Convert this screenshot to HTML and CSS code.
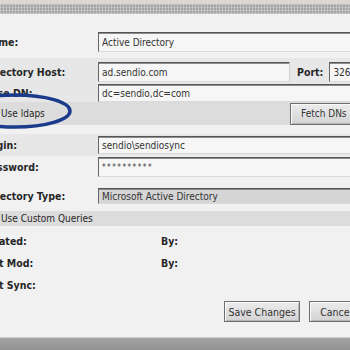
FILE: index.html
```html
<!DOCTYPE html>
<html lang="en">
<head>
    <meta charset="UTF-8">
    <title>Directory Settings</title>
    <link rel="stylesheet" href="styles.css">
</head>
<body>

    <!-- Barra superior -->
    <div class="top-bar"></div>

    <div class="form">
        <div class="row row-name">
            <label class="label">Name:</label>
            <input class="field" type="text" value="Active Directory">
        </div>

        <div class="row row-host shade">
            <label class="label">Directory Host:</label>
            <input class="field field-host" type="text" value="ad.sendio.com">
            <label class="label label-port">Port:</label>
            <input class="field field-port" type="text" value="3268">
        </div>

        <div class="row row-dn shade">
            <label class="label">Base DN:</label>
            <input class="field" type="text" value="dc=sendio,dc=com">
        </div>

        <div class="row row-ldaps dark">
            <input class="check" type="checkbox">
            <span class="check-text">Use ldaps</span>
            <button class="btn btn-fetch">Fetch DNs</button>
        </div>

        <div class="row row-login shade">
            <label class="label">Login:</label>
            <input class="field" type="text" value="sendio\sendiosync">
        </div>

        <div class="row row-pass">
            <label class="label">Password:</label>
            <input class="field field-pass" type="text" value="**********">
        </div>

        <div class="row row-type">
            <label class="label">Directory Type:</label>
            <div class="field select">Microsoft Active Directory</div>
        </div>

        <div class="row row-custom dark">
            <input class="check" type="checkbox">
            <span class="check-text">Use Custom Queries</span>
        </div>

        <div class="row row-meta first">
            <span class="label">Created:</span>
            <span class="label by">By:</span>
        </div>
        <div class="row row-meta">
            <span class="label">Last Mod:</span>
            <span class="label by">By:</span>
        </div>
        <div class="row row-meta">
            <span class="label">Last Sync:</span>
        </div>

        <div class="row row-actions">
            <button class="btn btn-save">Save Changes</button>
            <button class="btn btn-cancel">Cancel</button>
        </div>
    </div>

    <!-- Barra inferior -->
    <div class="bottom-bar"></div>

    <!-- Marcação azul em volta do "Use ldaps" -->
    <svg class="mark" width="120" height="50" viewBox="0 0 120 50">
        <ellipse cx="40" cy="24" rx="55" ry="16" fill="none" stroke="#1a3a8c" stroke-width="3.5"/>
    </svg>

</body>
</html>
```

FILE: styles.css
```css
body {
    margin: 0;
    width: 350px;
    height: 350px;
    overflow: hidden;
    position: relative;
    display: flex;
    flex-direction: column;
    background-color: #f1f1f1;
    font-family: "DejaVu Sans Condensed", "DejaVu Sans", sans-serif;
    font-size: 10.5px;
    color: #262626;
}

/* Barra superior com textura */
.top-bar {
    height: 10px;
    border-top: 4px solid #d9d7d0;
    background-color: #a6a6a6;
    background-image:
        repeating-linear-gradient(90deg, rgba(255, 255, 255, 0.28) 0 1px, transparent 1px 3px),
        repeating-linear-gradient(0deg, rgba(255, 255, 255, 0.22) 0 1px, transparent 1px 3px);
}

/* O formulario comeca fora da tela, como no recorte */
.form {
    flex: 1;
    margin-left: -16px;
    width: 380px;
    display: flex;
    flex-direction: column;
}

.row {
    display: flex;
    align-items: center;
}

.shade {
    background-color: #e7e7e7;
}

.dark {
    background-color: #dcdcdc;
}

.label {
    width: 114px;
    flex-shrink: 0;
    font-weight: bold;
}

.field {
    box-sizing: border-box;
    flex: 1;
    height: 20px;
    margin: 0;
    padding: 0 3px;
    border: 1px solid;
    border-color: #555 #d0d0d0 #dadada #666;
    box-shadow: inset 0 1px 0 #8c8c8c;
    background-color: #f6f6f6;
    font: inherit;
    font-size: 10px;
    color: #333;
    outline: none;
}

.row-name {
    padding: 18px 0 6px;
}

.row-host {
    padding: 4px 0 1px;
}

.field-host {
    flex: none;
    width: 192px;
}

.label-port {
    width: auto;
    margin: 0 6px 0 7px;
}

.field-port {
    flex: none;
    width: 40px;
}

.row-dn {
    padding-top: 1px;
}

.row-dn .field {
    height: 18px;
}

.check {
    width: 13px;
    height: 13px;
    margin: 0 4px 0 0;
}

.check-text {
    font-size: 10px;
}

.row-ldaps {
    height: 23px;
}

.btn {
    box-sizing: border-box;
    height: 21px;
    padding: 0;
    border: 1px solid #6f6f6f;
    box-shadow: inset 1px 1px 0 #fafafa, inset -1px -1px 0 #b5b5b5;
    background: linear-gradient(#ececec, #d3d3d3);
    font: inherit;
    font-size: 10px;
    color: #333;
    white-space: nowrap;
}

.btn-fetch {
    margin-left: auto;
    width: 74px;
    height: 22px;
    padding-left: 10px;
    text-align: left;
}

.row-login {
    margin-top: 9px;
    padding: 2px 0;
}

.row-login .field {
    height: 18px;
}

.row-pass {
    padding: 1px 0;
}

.field-pass {
    font-size: 8px;
    letter-spacing: 1.5px;
}

.row-type {
    margin-top: 8px;
    padding: 2px 0;
}

.select {
    height: 16px;
    display: flex;
    align-items: center;
    background-color: #d5d5d5;
}

.row-custom {
    margin-top: 5px;
    height: 15px;
}

.row-meta {
    height: 22px;
}

.row-meta .label:first-child {
    margin-left: -3px;
    width: 117px;
}

.row-meta.first {
    margin-top: 4px;
}

.by {
    width: auto;
    margin-left: 63px;
}

.row-actions {
    margin-top: 5px;
    padding-left: 240px;
    gap: 9px;
}

.btn-save {
    width: 85px;
    font-size: 10.5px;
}

.btn-cancel {
    width: 60px;
    padding-left: 10px;
    font-size: 10.5px;
    text-align: left;
}

/* Barra inferior */
.bottom-bar {
    height: 12px;
    border-top: 1px solid #cfcfcf;
    background: linear-gradient(#a3a3a3, #929292);
}

/* Circulo desenhado por cima */
.mark {
    position: absolute;
    left: -25px;
    top: 87px;
}
```
